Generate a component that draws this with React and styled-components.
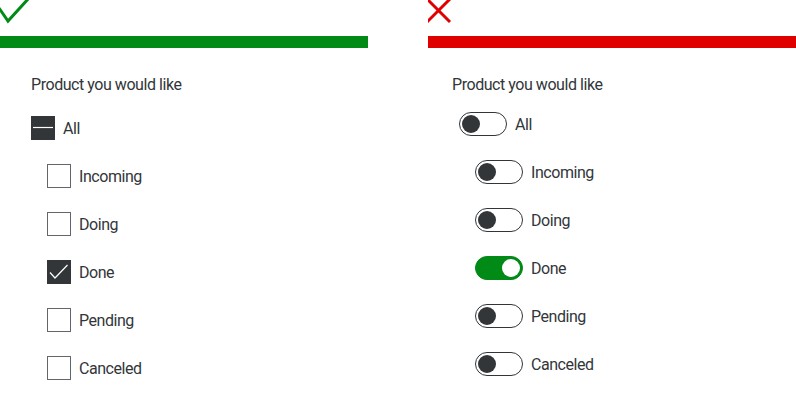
import React from "react";
import styled, { createGlobalStyle } from "styled-components";

const GlobalStyle = createGlobalStyle`
  body {
    margin: 0;
    background: #fff;
    font-family: Roboto, "Liberation Sans", sans-serif;
    color: #323639;
  }
`;

const items = [
  { label: "Incoming", on: false },
  { label: "Doing", on: false },
  { label: "Done", on: true },
  { label: "Pending", on: false },
  { label: "Canceled", on: false },
];

export default function App() {
  return (
    <>
      <GlobalStyle />
      <Page>
        <Panel>
          <IconRow>
            <svg width="32" height="36" viewBox="0 0 32 36">
              <path
                d="M-1 8 L8 21 L29 -2"
                fill="none"
                stroke="#018a16"
                strokeWidth="3"
              />
            </svg>
          </IconRow>
          <Bar color="#018a16" />
          <Content pad="31px">
            <Legend>Product you would like</Legend>
            <CheckRow gap="20px">
              <Box checked>
                <svg width="24" height="24" viewBox="0 0 24 24">
                  <path d="M2 11.5 L22 11.5" stroke="#fff" strokeWidth="1.2" />
                </svg>
              </Box>
              <Label>All</Label>
            </CheckRow>
            {items.map((item) => (
              <CheckRow key={item.label} indent gap="24px">
                <Box checked={item.on}>
                  {item.on && (
                    <svg width="24" height="24" viewBox="0 0 24 24">
                      <path
                        d="M3 12.5 L8 18 L20.5 5"
                        fill="none"
                        stroke="#fff"
                        strokeWidth="1.2"
                      />
                    </svg>
                  )}
                </Box>
                <Label>{item.label}</Label>
              </CheckRow>
            ))}
          </Content>
        </Panel>
        <Panel>
          <IconRow>
            <svg width="32" height="36" viewBox="0 0 32 36">
              <path
                d="M0 -1 L23 22 M23 -1 L0 22"
                fill="none"
                stroke="#e00000"
                strokeWidth="3"
                transform="translate(-1 0)"
              />
            </svg>
          </IconRow>
          <Bar color="#e00000" />
          <Content pad="24px">
            <Legend>Product you would like</Legend>
            <CheckRow gap="16px" toggle>
              <Switch>
                <Knob />
              </Switch>
              <Label>All</Label>
            </CheckRow>
            {items.map((item) => (
              <CheckRow key={item.label} indent gap="24px" toggle>
                <Switch on={item.on}>
                  <Knob on={item.on} />
                </Switch>
                <Label>{item.label}</Label>
              </CheckRow>
            ))}
          </Content>
        </Panel>
      </Page>
    </>
  );
}

const Page = styled.div`
  display: grid;
  grid-template-columns: 368px 368px;
  column-gap: 60px;
  width: 796px;
  height: 405px;
  overflow: hidden;
`;

const Panel = styled.div`
  display: flex;
  flex-direction: column;
`;

const IconRow = styled.div`
  height: 36px;
  overflow: hidden;
  svg {
    display: block;
  }
`;

const Bar = styled.div`
  height: 12px;
  background: ${(p) => p.color};
`;

const Content = styled.div`
  display: flex;
  flex-direction: column;
  padding: 24px 0 0 ${(p) => p.pad};
`;

const Legend = styled.div`
  font-size: 16px;
  letter-spacing: -0.45px;
  line-height: 24px;
  height: 24px;
  padding-top: 1px;
  margin-bottom: -1px;
`;

const CheckRow = styled.div`
  display: flex;
  align-items: center;
  height: 24px;
  gap: 8px;
  margin-top: ${(p) => p.gap};
  margin-left: ${(p) => (p.indent ? "16px" : "0")};
  padding-left: ${(p) => (p.toggle ? "7px" : "0")};
`;

const Box = styled.div`
  box-sizing: border-box;
  width: 24px;
  height: 24px;
  flex: none;
  border: 1px solid ${(p) => (p.checked ? "#323639" : "#626669")};
  background: ${(p) => (p.checked ? "#323639" : "#fff")};
  svg {
    display: block;
    margin: -1px;
  }
`;

const Switch = styled.div`
  box-sizing: border-box;
  position: relative;
  width: 48px;
  height: 24px;
  flex: none;
  border-radius: 12px;
  border: 1px solid ${(p) => (p.on ? "#018a16" : "#323639")};
  background: ${(p) => (p.on ? "#018a16" : "#fff")};
`;

const Knob = styled.span`
  position: absolute;
  top: 2px;
  left: ${(p) => (p.on ? "26px" : "2px")};
  width: 18px;
  height: 18px;
  border-radius: 50%;
  background: ${(p) => (p.on ? "#fff" : "#323639")};
`;

const Label = styled.span`
  font-size: 16px;
  letter-spacing: -0.45px;
  line-height: 22px;
  padding-top: 2px;
  color: #323639;
`;
